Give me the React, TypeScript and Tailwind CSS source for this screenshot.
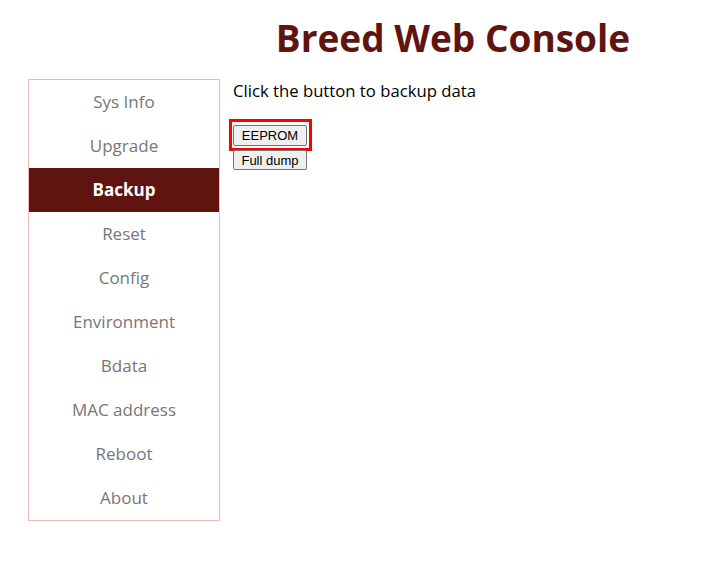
const menu = [
  "Sys Info",
  "Upgrade",
  "Backup",
  "Reset",
  "Config",
  "Environment",
  "Bdata",
  "MAC address",
  "Reboot",
  "About",
];

export default function App() {
  return (
    <div className="min-h-[567px] bg-white px-[28px] font-['Open_Sans',sans-serif]">
      <div className="grid grid-cols-[192px_1fr]">
        <div />
        <h1 className="pt-[14px] pb-[17px] text-center text-[37px] leading-[48px] font-bold text-[#5f1410]">
          Breed Web Console
        </h1>
        <nav className="border border-[#f2b8b8]">
          {menu.map((item) => (
            <div
              key={item}
              className={
                item === "Backup"
                  ? "flex h-[44px] items-center justify-center bg-[#5f1410] text-[17px] font-bold text-white"
                  : "flex h-[44px] items-center justify-center text-[17px] text-[#777777]"
              }
            >
              {item}
            </div>
          ))}
        </nav>
        <main className="pl-[13px]">
          <p className="text-[16.7px] leading-[24px] text-black">
            Click the button to backup data
          </p>
          <div className="mt-[16px] flex flex-col items-start">
            <div className="-ml-[4px] border-[3px] border-[#ff0000] pl-[1px] pr-[2px] pt-[3px] pb-[2px]">
              <button className="block h-[21px] w-[74px] rounded-[2px] border border-[#767676] bg-[#efefef] font-['Liberation_Sans',sans-serif] text-[13px] leading-none text-black">
                EEPROM
              </button>
            </div>
            <button className="-mt-[1px] block h-[20px] w-[74px] rounded-[2px] border border-[#767676] bg-[#efefef] font-['Liberation_Sans',sans-serif] text-[13px] leading-none text-black">
              Full dump
            </button>
          </div>
        </main>
      </div>
    </div>
  );
}
